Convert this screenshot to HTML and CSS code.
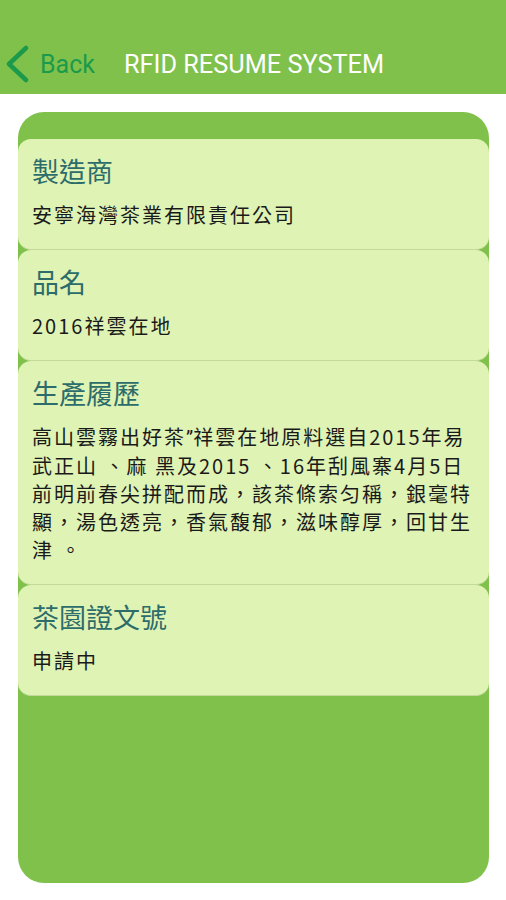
FILE: index.html
```html
<!DOCTYPE html>
<html lang="zh-Hant">
<head>
<meta charset="utf-8">
<title>RFID RESUME SYSTEM</title>
<link rel="stylesheet" href="styles.css">
</head>
<body>
<header class="topbar">
  <div class="back">
    <svg class="chev" width="26" height="38" viewBox="0 0 26 38"><path d="M22 3 L5 19 L22 35" fill="none" stroke="#1b9a4b" stroke-width="4.5" stroke-linecap="round" stroke-linejoin="round"/></svg>
    <span class="back-text">Back</span>
  </div>
  <h1 class="title">RFID RESUME SYSTEM</h1>
</header>
<main class="page">
  <section class="panel">
    <div class="card">
      <h2 class="card-title">製造商</h2>
      <p class="card-body">安寧海灣茶業有限責任公司</p>
    </div>
    <div class="card">
      <h2 class="card-title">品名</h2>
      <p class="card-body">2016祥雲在地</p>
    </div>
    <div class="card">
      <h2 class="card-title">生產履歷</h2>
      <p class="card-body">高山雲霧出好茶<span class="latin">”</span>祥雲在地原料選自2015年易<br>武正山 、麻 黑及2015 、16年刮風寨4月5日<br>前明前春尖拼配而成，該茶條索匀稱，銀毫特<br>顯，湯色透亮，香氣馥郁，滋味醇厚，回甘生<br>津 。</p>
    </div>
    <div class="card">
      <h2 class="card-title">茶園證文號</h2>
      <p class="card-body">申請中</p>
    </div>
  </section>
</main>
</body>
</html>
```
FILE: styles.css
```css
html, body {
  margin: 0;
  padding: 0;
  background: #ffffff;
}
body {
  width: 506px;
  height: 900px;
  overflow: hidden;
  font-family: Roboto, "Noto Sans CJK TC", sans-serif;
}
.topbar {
  height: 94px;
  box-sizing: border-box;
  background: #80c14c;
  display: flex;
  align-items: center;
  padding: 34px 0 0 4px;
}
.back {
  display: flex;
  align-items: center;
  gap: 10px;
}
.chev {
  display: block;
}
.back-text {
  font-family: Roboto, sans-serif;
  font-size: 25px;
  color: #1b9a4b;
}
.title {
  margin: 0 0 0 29px;
  font-family: Roboto, sans-serif;
  font-weight: 400;
  font-size: 25.3px;
  color: #ffffff;
}
.page {
  padding: 18px 17px 0 18px;
}
.panel {
  height: 771px;
  box-sizing: border-box;
  background: #80c14c;
  border-radius: 26px;
  padding-top: 27px;
  display: flex;
  flex-direction: column;
}
.card {
  background: #dff3b5;
  border-radius: 13px;
  padding: 12px 14px 20px 14px;
  border-bottom: 1px solid #c4d99c;
}
.card-title {
  margin: 0;
  font-family: "Noto Sans CJK TC", sans-serif;
  font-weight: 400;
  font-size: 27px;
  line-height: 40px;
  color: #2c6c6a;
}
.card-body {
  margin: 10px 0 0 0;
  font-family: "Noto Sans CJK TC", sans-serif;
  font-size: 20px;
  line-height: 28px;
  letter-spacing: 2px;
  color: #1a1a1a;
}
.latin {
  font-family: Roboto, sans-serif;
  letter-spacing: 0;
}
```
